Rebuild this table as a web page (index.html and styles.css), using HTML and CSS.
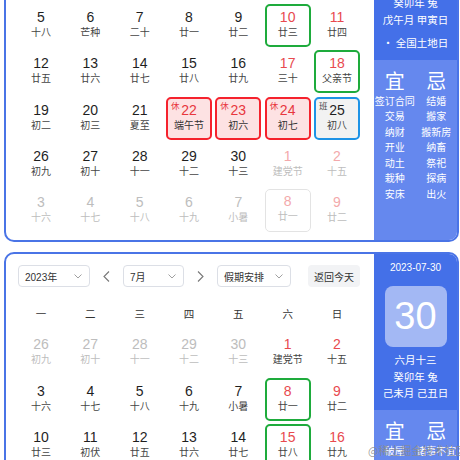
FILE: index.html
```html
<!DOCTYPE html>
<html lang="zh-CN">
<head>
<meta charset="utf-8">
<title>万年历</title>
<link rel="stylesheet" href="styles.css">
</head>
<body>
<div class="page">
  <section class="cal cal-june">
    <div class="main">
      <div class="toolbar">
        <div class="select s-year"><span>2023年</span><svg class="chev" viewBox="0 0 8 5"><polyline points="0.5,0.5 4,4 7.5,0.5"/></svg></div>
        <div class="nav"><svg viewBox="0 0 7 11"><polyline points="6,0.5 1,5.5 6,10.5"/></svg></div>
        <div class="select s-month"><span>6月</span><svg class="chev" viewBox="0 0 8 5"><polyline points="0.5,0.5 4,4 7.5,0.5"/></svg></div>
        <div class="nav"><svg viewBox="0 0 7 11"><polyline points="1,0.5 6,5.5 1,10.5"/></svg></div>
        <div class="select s-hol"><span>假期安排</span><svg class="chev" viewBox="0 0 8 5"><polyline points="0.5,0.5 4,4 7.5,0.5"/></svg></div>
        <button class="today">返回今天</button>
      </div>
      <div class="week"><span>一</span><span>二</span><span>三</span><span>四</span><span>五</span><span>六</span><span>日</span></div>
      <div class="days">
        <div class="d out"><span class="n">29</span><span class="l">十一</span></div>
        <div class="d out"><span class="n">30</span><span class="l">十二</span></div>
        <div class="d out"><span class="n">31</span><span class="l">十三</span></div>
        <div class="d"><span class="n">1</span><span class="l">儿童节</span></div>
        <div class="d"><span class="n">2</span><span class="l">十五</span></div>
        <div class="d we"><span class="n">3</span><span class="l">十六</span></div>
        <div class="d we"><span class="n">4</span><span class="l">十七</span></div>

        <div class="d"><span class="n">5</span><span class="l">十八</span></div>
        <div class="d"><span class="n">6</span><span class="l">芒种</span></div>
        <div class="d"><span class="n">7</span><span class="l">二十</span></div>
        <div class="d"><span class="n">8</span><span class="l">廿一</span></div>
        <div class="d"><span class="n">9</span><span class="l">廿二</span></div>
        <div class="d we mark"><span class="n">10</span><span class="l">廿三</span></div>
        <div class="d we"><span class="n">11</span><span class="l">廿四</span></div>

        <div class="d"><span class="n">12</span><span class="l">廿五</span></div>
        <div class="d"><span class="n">13</span><span class="l">廿六</span></div>
        <div class="d"><span class="n">14</span><span class="l">廿七</span></div>
        <div class="d"><span class="n">15</span><span class="l">廿八</span></div>
        <div class="d"><span class="n">16</span><span class="l">廿九</span></div>
        <div class="d we"><span class="n">17</span><span class="l">三十</span></div>
        <div class="d we mark"><span class="n">18</span><span class="l">父亲节</span></div>

        <div class="d"><span class="n">19</span><span class="l">初二</span></div>
        <div class="d"><span class="n">20</span><span class="l">初三</span></div>
        <div class="d"><span class="n">21</span><span class="l">夏至</span></div>
        <div class="d rest"><i class="tag">休</i><span class="n">22</span><span class="l">端午节</span></div>
        <div class="d rest"><i class="tag">休</i><span class="n">23</span><span class="l">初六</span></div>
        <div class="d rest"><i class="tag">休</i><span class="n">24</span><span class="l">初七</span></div>
        <div class="d work"><i class="tag">班</i><span class="n">25</span><span class="l">初八</span></div>

        <div class="d"><span class="n">26</span><span class="l">初九</span></div>
        <div class="d"><span class="n">27</span><span class="l">初十</span></div>
        <div class="d"><span class="n">28</span><span class="l">十一</span></div>
        <div class="d"><span class="n">29</span><span class="l">十二</span></div>
        <div class="d"><span class="n">30</span><span class="l">十三</span></div>
        <div class="d out we"><span class="n">1</span><span class="l">建党节</span></div>
        <div class="d out we"><span class="n">2</span><span class="l">十五</span></div>

        <div class="d out"><span class="n">3</span><span class="l">十六</span></div>
        <div class="d out"><span class="n">4</span><span class="l">十七</span></div>
        <div class="d out"><span class="n">5</span><span class="l">十八</span></div>
        <div class="d out"><span class="n">6</span><span class="l">十九</span></div>
        <div class="d out"><span class="n">7</span><span class="l">小暑</span></div>
        <div class="d out we hover"><span class="n">8</span><span class="l">廿一</span></div>
        <div class="d out we"><span class="n">9</span><span class="l">廿二</span></div>
      </div>
    </div>
    <aside class="side">
      <div class="side-top">
        <div class="side-date">2023-06-10</div>
        <div class="big">10</div>
        <div class="side-line">四月廿三</div>
        <div class="side-line">癸卯年 兔</div>
        <div class="side-line">戊午月 甲寅日</div>
        <div class="fest">• 全国土地日</div>
      </div>
      <div class="side-bottom">
        <div class="yj-col">
          <div class="yj-title">宜</div>
          <div class="yj-item">签订合同</div>
          <div class="yj-item">交易</div>
          <div class="yj-item">纳财</div>
          <div class="yj-item">开业</div>
          <div class="yj-item">动土</div>
          <div class="yj-item">栽种</div>
          <div class="yj-item">安床</div>
        </div>
        <div class="yj-col">
          <div class="yj-title">忌</div>
          <div class="yj-item">结婚</div>
          <div class="yj-item">搬家</div>
          <div class="yj-item">搬新房</div>
          <div class="yj-item">纳畜</div>
          <div class="yj-item">祭祀</div>
          <div class="yj-item">探病</div>
          <div class="yj-item">出火</div>
        </div>
      </div>
    </aside>
  </section>

  <section class="cal">
    <div class="main">
      <div class="toolbar">
        <div class="select s-year"><span>2023年</span><svg class="chev" viewBox="0 0 8 5"><polyline points="0.5,0.5 4,4 7.5,0.5"/></svg></div>
        <div class="nav"><svg viewBox="0 0 7 11"><polyline points="6,0.5 1,5.5 6,10.5"/></svg></div>
        <div class="select s-month"><span>7月</span><svg class="chev" viewBox="0 0 8 5"><polyline points="0.5,0.5 4,4 7.5,0.5"/></svg></div>
        <div class="nav"><svg viewBox="0 0 7 11"><polyline points="1,0.5 6,5.5 1,10.5"/></svg></div>
        <div class="select s-hol"><span>假期安排</span><svg class="chev" viewBox="0 0 8 5"><polyline points="0.5,0.5 4,4 7.5,0.5"/></svg></div>
        <button class="today">返回今天</button>
      </div>
      <div class="week"><span>一</span><span>二</span><span>三</span><span>四</span><span>五</span><span>六</span><span>日</span></div>
      <div class="days">
        <div class="d out"><span class="n">26</span><span class="l">初九</span></div>
        <div class="d out"><span class="n">27</span><span class="l">初十</span></div>
        <div class="d out"><span class="n">28</span><span class="l">十一</span></div>
        <div class="d out"><span class="n">29</span><span class="l">十二</span></div>
        <div class="d out"><span class="n">30</span><span class="l">十三</span></div>
        <div class="d we"><span class="n">1</span><span class="l">建党节</span></div>
        <div class="d we"><span class="n">2</span><span class="l">十五</span></div>

        <div class="d"><span class="n">3</span><span class="l">十六</span></div>
        <div class="d"><span class="n">4</span><span class="l">十七</span></div>
        <div class="d"><span class="n">5</span><span class="l">十八</span></div>
        <div class="d"><span class="n">6</span><span class="l">十九</span></div>
        <div class="d"><span class="n">7</span><span class="l">小暑</span></div>
        <div class="d we mark"><span class="n">8</span><span class="l">廿一</span></div>
        <div class="d we"><span class="n">9</span><span class="l">廿二</span></div>

        <div class="d"><span class="n">10</span><span class="l">廿三</span></div>
        <div class="d"><span class="n">11</span><span class="l">初伏</span></div>
        <div class="d"><span class="n">12</span><span class="l">廿五</span></div>
        <div class="d"><span class="n">13</span><span class="l">廿六</span></div>
        <div class="d"><span class="n">14</span><span class="l">廿七</span></div>
        <div class="d we mark"><span class="n">15</span><span class="l">廿八</span></div>
        <div class="d we"><span class="n">16</span><span class="l">廿九</span></div>

        <div class="d"><span class="n">17</span><span class="l">三十</span></div>
        <div class="d"><span class="n">18</span><span class="l">六月</span></div>
        <div class="d"><span class="n">19</span><span class="l">初二</span></div>
        <div class="d"><span class="n">20</span><span class="l">初三</span></div>
        <div class="d"><span class="n">21</span><span class="l">中伏</span></div>
        <div class="d we"><span class="n">22</span><span class="l">初五</span></div>
        <div class="d we"><span class="n">23</span><span class="l">大暑</span></div>
      </div>
    </div>
    <aside class="side">
      <div class="side-top">
        <div class="side-date">2023-07-30</div>
        <div class="big">30</div>
        <div class="side-line">六月十三</div>
        <div class="side-line">癸卯年 兔</div>
        <div class="side-line">己未月 己丑日</div>
      </div>
      <div class="side-bottom">
        <div class="yj-col">
          <div class="yj-title">宜</div>
          <div class="yj-item">破屋</div>
        </div>
        <div class="yj-col">
          <div class="yj-title">忌</div>
          <div class="yj-item">诸事不宜</div>
        </div>
      </div>
    </aside>
  </section>
  <div class="watermark">@稀土掘金技术社区</div>
</div>
</body>
</html>
```

FILE: styles.css
```css
* {
  box-sizing: border-box;
  margin: 0;
  padding: 0;
}

html,
body {
  width: 460px;
  height: 460px;
  overflow: hidden;
  background: #ffffff;
}

body {
  font-family: "Liberation Sans", "Noto Sans CJK SC", sans-serif;
  color: #1f1f1f;
}

.page {
  position: relative;
  display: flow-root;
  height: 460px;
  padding-left: 4px;
}

.cal {
  width: 455px;
  display: flex;
  border: 2px solid #4a74e6;
  border-radius: 10px;
  overflow: hidden;
  background: #ffffff;
}

.cal-june {
  margin-top: -121.5px;
}

.cal + .cal {
  margin-top: 10px;
}

.main {
  flex: 1;
  padding: 11px 14px 8px 12px;
}

/* toolbar */
.toolbar {
  display: flex;
  align-items: center;
  height: 22px;
  margin-bottom: 12px;
}

.select {
  height: 22px;
  border: 1px solid #dcdfe6;
  border-radius: 4px;
  display: flex;
  align-items: center;
  justify-content: space-between;
  padding: 0 7px 0 6px;
  font-size: 10px;
  color: #333333;
  font-family: "Liberation Sans", "Noto Sans CJK SC", sans-serif;
}

.s-year {
  width: 72px;
}

.s-month {
  width: 61px;
}

.s-hol {
  width: 74px;
}

.chev {
  width: 8px;
  height: 5px;
  fill: none;
  stroke: #a0a0a0;
  stroke-width: 1;
}

.nav {
  width: 33px;
  display: flex;
  justify-content: center;
}

.nav svg {
  width: 7px;
  height: 11px;
  fill: none;
  stroke: #777777;
  stroke-width: 1.1;
}

.today {
  margin-left: auto;
  width: 52px;
  height: 22px;
  border: none;
  border-radius: 4px;
  background: #f2f3f5;
  color: #333333;
  font-size: 10px;
  font-family: "Noto Sans CJK SC", sans-serif;
}

/* week header */
.week {
  display: grid;
  grid-template-columns: repeat(7, 1fr);
  column-gap: 3.3px;
  height: 28px;
  align-items: center;
  text-align: center;
  font-size: 10.5px;
  color: #333333;
  font-family: "Noto Sans CJK SC", sans-serif;
  margin-bottom: 4px;
}

/* day grid */
.days {
  display: grid;
  grid-template-columns: repeat(7, 1fr);
  grid-auto-rows: 43px;
  column-gap: 3.3px;
  row-gap: 3.4px;
}

.d {
  position: relative;
  border: 2px solid transparent;
  border-radius: 5px;
  display: flex;
  flex-direction: column;
  align-items: center;
  padding-top: 3px;
}

.n {
  font-size: 14px;
  line-height: 16px;
  color: #1f1f1f;
}

.l {
  font-size: 10px;
  line-height: 14px;
  color: #444444;
  font-family: "Noto Sans CJK SC", sans-serif;
}

.we .n {
  color: #e84a4f;
}

.out .n {
  color: #bdbdbd;
}

.out .l {
  color: #bdbdbd;
}

.out.we .n {
  color: #f3a9ab;
}

.mark {
  border-color: #1eab3c;
}

.hover {
  border: 1.5px solid #e3e3e3;
}

.rest {
  border-color: #f5222d;
  background: #fde2e3;
}

.rest .n {
  color: #e8363d;
}

.rest .l {
  color: #333333;
}

.work {
  border-color: #1e93e6;
  background: #f2f2f2;
}

.work .n {
  color: #1f1f1f;
}

.tag {
  position: absolute;
  top: 1px;
  left: 3px;
  font-style: normal;
  font-size: 8.5px;
  line-height: 10px;
  font-family: "Noto Sans CJK SC", sans-serif;
}

.rest .tag {
  color: #e8363d;
}

.work .tag {
  color: #444444;
}

/* side panel */
.side {
  width: 83px;
  display: flex;
  flex-direction: column;
  color: #ffffff;
  text-align: center;
  font-family: "Noto Sans CJK SC", sans-serif;
}

.side-top {
  background: #4470e8;
  padding: 7px 0 8px;
}

.side-date {
  font-family: "Liberation Sans", sans-serif;
  font-size: 10px;
  line-height: 14px;
}

.big {
  width: 62px;
  height: 61px;
  margin: 11px auto 5px;
  border-radius: 8px;
  background: #a3b8f4;
  display: flex;
  align-items: center;
  justify-content: center;
  font-family: "Liberation Sans", sans-serif;
  font-size: 38px;
}

.side-line {
  font-size: 10.5px;
  line-height: 16.5px;
}

.fest {
  margin-top: 7px;
  font-size: 10.5px;
  line-height: 16.5px;
}

.side-bottom {
  flex: 1;
  display: flex;
  background: #6588ee;
  padding-top: 9px;
}

.yj-col {
  flex: 1;
}

.yj-title {
  font-size: 20px;
  line-height: 24px;
}

.yj-item {
  font-size: 10px;
  line-height: 15.5px;
  white-space: nowrap;
}

.watermark {
  position: absolute;
  left: 368px;
  top: 442px;
  font-size: 11px;
  line-height: 16px;
  color: rgba(140, 140, 140, 0.85);
  font-family: "Noto Sans CJK SC", sans-serif;
  white-space: nowrap;
}
```
